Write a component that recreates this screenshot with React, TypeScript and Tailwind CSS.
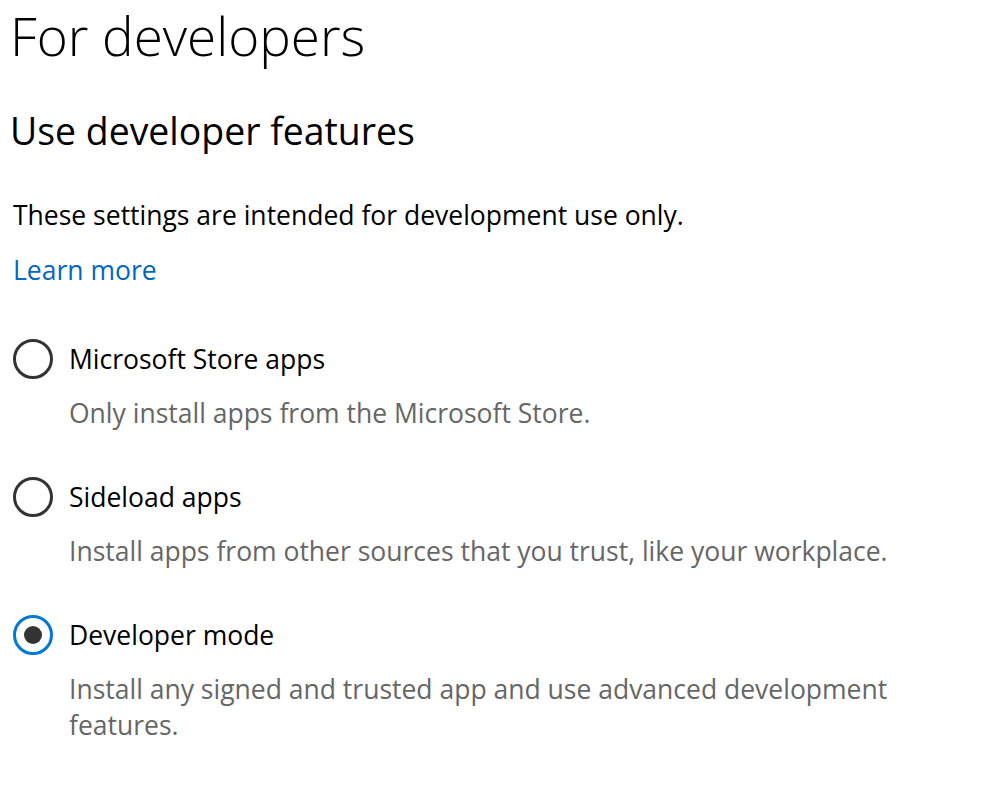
import React, { useState } from 'react';

type Mode = 'store' | 'sideload' | 'developer';

const OPTIONS: { id: Mode; label: string; description: string }[] = [
  { id: 'store', label: 'Microsoft Store apps', description: 'Only install apps from the Microsoft Store.' },
  { id: 'sideload', label: 'Sideload apps', description: 'Install apps from other sources that you trust, like your workplace.' },
  { id: 'developer', label: 'Developer mode', description: 'Install any signed and trusted app and use advanced development features.' },
];

const Radio: React.FC<{ checked: boolean }> = ({ checked }) => (
  <span
    className={
      checked
        ? 'flex h-[40px] w-[40px] shrink-0 items-center justify-center rounded-full border-[3px] border-[#0078d7]'
        : 'flex h-[40px] w-[40px] shrink-0 items-center justify-center rounded-full border-[3px] border-[#333333]'
    }
  >
    {checked && <span className="h-[18px] w-[18px] rounded-full bg-[#333333]" />}
  </span>
);

const App: React.FC = () => {
  const [mode, setMode] = useState<Mode>('developer');

  return (
    <div className="min-h-screen bg-white pl-[10px] text-black" style={{ fontFamily: '"Open Sans", "Noto Sans", sans-serif' }}>
      <h1 className="pt-[2px] text-[53px] font-light leading-[68px]">For developers</h1>
      <h2 className="mt-[35px] text-[37.4px] leading-[52px]">Use developer features</h2>
      <p className="mt-[40px] pl-[3px] text-[26.5px] leading-[36px]">These settings are intended for development use only.</p>
      <a href="#" className="mt-[19px] block pl-[3px] text-[26.5px] leading-[36px] text-[#0067c0]">Learn more</a>

      <div className="mt-[51px] flex flex-col gap-[46px] pl-[3px]">
        {OPTIONS.map((opt) => (
          <button key={opt.id} type="button" onClick={() => setMode(opt.id)} className="flex flex-col items-start text-left">
            <div className="flex items-center gap-[16px]">
              <Radio checked={mode === opt.id} />
              <span className="text-[26.5px] leading-[36px]">{opt.label}</span>
            </div>
            <p className="mt-[16px] w-[892px] pl-[56px] text-[26.5px] leading-[36px] text-[#666666]">{opt.description}</p>
          </button>
        ))}
      </div>
    </div>
  );
};

export default App;
